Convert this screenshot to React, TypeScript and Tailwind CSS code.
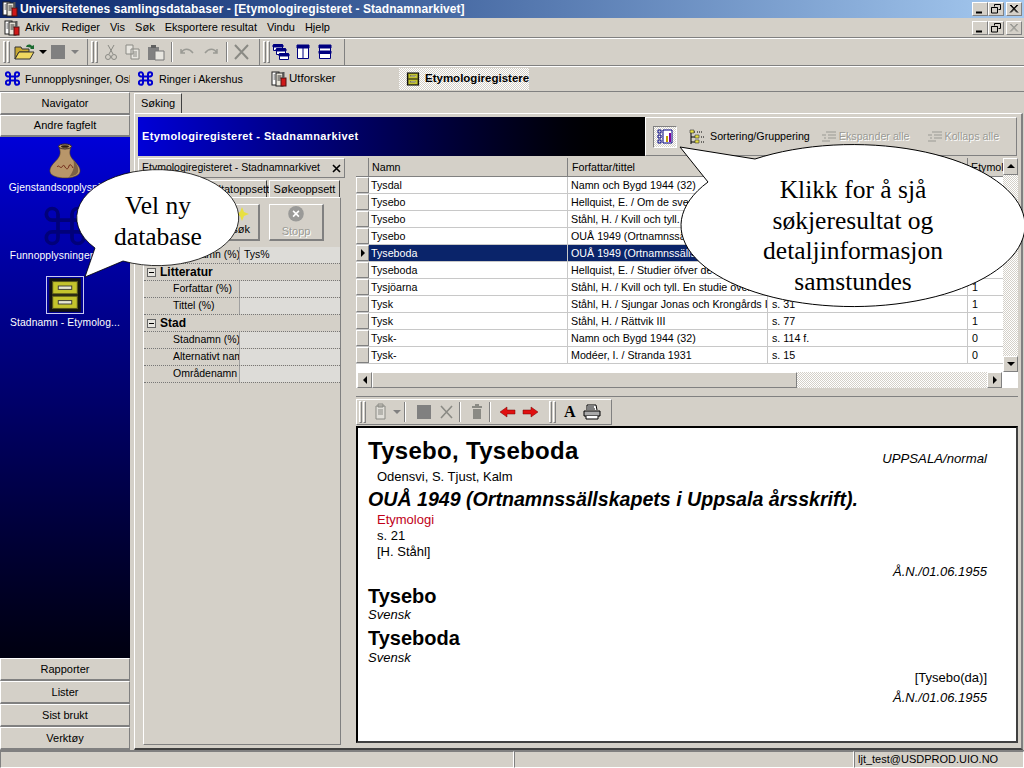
import React from 'react';

const raised = 'border border-t-white border-l-white border-r-[#808080] border-b-[#808080] bg-[#d4d0c8]';
const sunken = 'border border-t-[#808080] border-l-[#808080] border-r-white border-b-white';
const dither = 'bg-[repeating-conic-gradient(#d4d0c8_0_25%,#ffffff_0_50%)] bg-[length:2px_2px]';
const disabledText = 'text-[#9a9a94] [text-shadow:1px_1px_0_#ffffff]';

const AppIcon = ({ size = 16 }: { size?: number }) => (
  <svg width={size} height={size} viewBox="0 0 16 16" className="shrink-0">
    <rect x="1" y="1" width="7" height="13" fill="#fff" stroke="#222" />
    <rect x="5" y="2" width="7" height="13" fill="#e8e4d8" stroke="#222" />
    <path d="M6.5 5h4M6.5 7h4M6.5 9h3" stroke="#333" />
    <path d="M2.5 4h2M2.5 6h2M2.5 8h2" stroke="#555" />
    <rect x="10" y="7" width="5" height="8" fill="#d01818" stroke="#501010" />
    <rect x="11.5" y="1" width="2" height="6" fill="#555" />
  </svg>
);

const Knot = ({ size = 18, color = '#0000d0', width = 2.4 }: { size?: number; color?: string; width?: number }) => (
  <svg width={size} height={size} viewBox="0 0 18 18" fill="none" stroke={color} strokeWidth={width} className="shrink-0">
    <path d="M6 6V4a2.5 2.5 0 1 0-2.5 2.5H14.5A2.5 2.5 0 1 0 12 4v10a2.5 2.5 0 1 0 2.5-2.5H3.500A2.500 2.500 0 1 0 6 14Z" />
  </svg>
);

const Cabinet = ({ size = 16 }: { size?: number }) => (
  <svg width={size} height={size} viewBox="0 0 16 16" className="shrink-0">
    <rect x="1" y="0.500" width="14" height="15" fill="#111" />
    <rect x="2.500" y="2" width="11" height="5.500" fill="#c4c42c" stroke="#55551a" strokeWidth=".5" />
    <rect x="2.500" y="8.500" width="11" height="5.500" fill="#c4c42c" stroke="#55551a" strokeWidth=".5" />
    <rect x="5" y="4" width="6" height="1.500" fill="#e8e8d0" stroke="#333" strokeWidth=".4" />
    <rect x="5" y="10.500" width="6" height="1.500" fill="#e8e8d0" stroke="#333" strokeWidth=".4" />
  </svg>
);

const Vase = () => (
  <svg width="32" height="36" viewBox="0 0 32 36" className="shrink-0">
    <ellipse cx="16" cy="3.500" rx="6.500" ry="2.500" fill="#b89a72" stroke="#3a2a18" />
    <ellipse cx="16" cy="3.500" rx="4" ry="1.300" fill="#2a1c10" />
    <path d="M10.500 5c1 5 1 7-2 11C5 20 0 24 1 29c1 4 8 6 15 6s14-2 15-6c1-5-4-9-7.500-13-3-4-3-6-2-11-3 1.500-8 1.500-11 0Z" fill="#b8966a" stroke="#4a3520" strokeWidth=".6" />
    <path d="M8 24c2-3 3 2 5 0s1-3 3 0 3 2 4-1 3 0 4 2" fill="none" stroke="#702818" strokeWidth="1" />
    <path d="M24 16c3 4 6 8 5 13-1 3-5 4-9 5 5-6 6-12 4-18Z" fill="#7d6244" />
  </svg>
);

const Grip = () => (
  <div className="flex gap-px h-[22px] mx-[2px] shrink-0">
    <div className={`w-[3px] ${raised}`} />
    <div className={`w-[3px] ${raised}`} />
  </div>
);

const Sep = () => <div className="w-[2px] h-[20px] mx-[3px] border-l border-l-[#808080] border-r border-r-white shrink-0" />;

const WinBtn = ({ kind, disabled }: { kind: 'min' | 'max' | 'close'; disabled?: boolean }) => (
  <div className={`w-[16px] h-[14px] flex items-center justify-center ${raised}`}>
    <svg width="12" height="10" viewBox="0 0 12 10" fill="none" stroke={disabled ? '#9a9a94' : '#000'}>
      {kind === 'min' && <path d="M2 8.500h6" strokeWidth="2" />}
      {kind === 'max' && <path d="M4.500 2.500V.500h6v5H8.500M1.500 3.500h6v5.500h-6ZM1.500 3.500h6" />}
      {kind === 'close' && <path d="M2 1l7 7.500M3 1l7 7.500M9 1L2 8.500M10 1L3 8.500" />}
    </svg>
  </div>
);

const Arrow = ({ dir, color = '#000' }: { dir: 'up' | 'down' | 'left' | 'right'; color?: string }) => {
  const d = { up: 'M0 5L4 1L8 5Z', down: 'M0 2H8L4 6Z', left: 'M6 0V8L2 4Z', right: 'M2 0V8L6 4Z' }[dir];
  return (
    <svg width="8" height="8" viewBox="0 0 8 8">
      <path d={d} fill={color} />
    </svg>
  );
};

const SideButton = ({ label, h = 'h-[23px]' }: { label: string; h?: string }) => (
  <div className={`${h} shrink-0 flex items-center justify-center text-black ${raised} border-b-[#6f6f6f] border-b-2`}>{label}</div>
);

const SideItem = ({ icon, label, h }: { icon: React.ReactNode; label: string; h: string }) => (
  <div className={`flex flex-col items-center justify-end text-white text-[10.300px] tracking-[0.1px] whitespace-nowrap ${h}`}>
    {icon}
    <div className="h-[18px] leading-[18px]">{label}</div>
  </div>
);

const rows = [
  ['Tysdal', 'Namn och Bygd 1944 (32)', 's. 113', '1'],
  ['Tysebo', 'Hellquist, E. / Om de svenska ortnamnen', 's. 44', '1'],
  ['Tysebo', 'Ståhl, H. / Kvill och tyll. En studie över', 's. 97', '1'],
  ['Tysebo', 'OUÅ 1949 (Ortnamnssällskapets i Uppsala', 's. 21', '1'],
  ['Tyseboda', 'OUÅ 1949 (Ortnamnssällskapets i Uppsala', 's. 21', '1'],
  ['Tyseboda', 'Hellquist, E. / Studier öfver de svenska sjönamn', 's. 636', '1'],
  ['Tysjöarna', 'Ståhl, H. / Kvill och tyll. En studie över', 's. 97', '1'],
  ['Tysk', 'Ståhl, H. / Sjungar Jonas och Krongårds I', 's. 31', '1'],
  ['Tysk', 'Ståhl, H. / Rättvik III', 's. 77', '1'],
  ['Tysk-', 'Namn och Bygd 1944 (32)', 's. 114 f.', '0'],
  ['Tysk-', 'Modéer, I. / Stranda 1931', 's. 15', '0'],
];

const PropRow = ({ label, value }: { label: string; value?: string }) => (
  <div className="h-[17px] flex border-b border-dotted border-b-[#777] shrink-0">
    <div className="w-[96px] shrink-0 flex items-center overflow-hidden whitespace-nowrap pl-[29px] text-[10.500px] border-r border-r-[#a0a0a0]">{label}</div>
    <div className="flex-1 bg-[#dddcd8] flex items-center pl-[4px] text-[10.500px]">{value}</div>
  </div>
);

const PropHead = ({ label }: { label: string }) => (
  <div className="h-[17px] flex items-center gap-[4px] pl-[3px] font-bold text-[12px] border-b border-dotted border-b-[#777] shrink-0">
    <div className="w-[9px] h-[9px] border border-[#666] bg-[#e8e6e0] flex items-center justify-center">
      <div className="w-[5px] h-px bg-black" />
    </div>
    {label}
  </div>
);

const TinyIcon = ({ children }: { children: React.ReactNode }) => (
  <svg width="18" height="18" viewBox="0 0 18 18" fill="none" className="shrink-0">{children}</svg>
);

export default function App() {
  return (
    <div className="relative w-[1024px] h-[768px] overflow-hidden bg-[#d4d0c8] flex flex-col text-[11px] text-black font-['Liberation_Sans',Arial,sans-serif]">
      {/* title bar */}
      <div className="h-[18px] shrink-0 flex items-center pl-[2px] pr-[2px] bg-gradient-to-r from-[#0a246a] to-[#a6caf0] text-white font-bold text-[12px] tracking-[0.06px]">
        <AppIcon />
        <span className="ml-[2px] flex-1">Universitetenes samlingsdatabaser - [Etymologiregisteret - Stadnamnarkivet]</span>
        <WinBtn kind="min" />
        <WinBtn kind="max" />
        <div className="w-[2px]" />
        <WinBtn kind="close" />
      </div>

      {/* menu */}
      <div className="h-[20px] shrink-0 flex items-center pl-[4px] pr-[2px] border-b border-b-[#808080]">
        <AppIcon />
        <nav className="flex gap-[10px] ml-[5px] flex-1">
          <span>Arkiv</span>
          <span className="ml-[2px]">Rediger</span>
          <span>Vis</span>
          <span>Søk</span>
          <span>Eksportere resultat</span>
          <span>Vindu</span>
          <span>Hjelp</span>
        </nav>
        <WinBtn kind="min" />
        <WinBtn kind="max" />
        <div className="w-[2px]" />
        <WinBtn kind="close" disabled />
      </div>

      {/* toolbar */}
      <div className="h-[28px] shrink-0 flex items-center border-t border-t-white border-b border-b-[#808080]">
        <div className="flex items-center h-full pl-[1px] pr-[2px] w-[88px] border-r border-r-[#808080]">
          <Grip />
          <svg width="22" height="18" viewBox="0 0 22 18" className="ml-[2px] shrink-0">
            <path d="M1 4h6l1 2h7v3H5L1 16Z" fill="#c8a830" stroke="#333" />
            <path d="M1 16l4-7h15l-4 7Z" fill="#f0d860" stroke="#333" />
            <path d="M12 4c1-3 4-3 6-1l2-1v4h-4l1-1c-1-1-3-1-5-1Z" fill="#1a6a30" />
          </svg>
          <div className="ml-[3px]"><Arrow dir="down" /></div>
          <div className="w-[14px] h-[14px] bg-[#808080] ml-[4px] shrink-0" />
          <div className="ml-[6px]"><Arrow dir="down" color="#808080" /></div>
        </div>
        <div className="flex items-center h-full pl-[1px] w-[172px] border-r border-r-[#808080]">
          <Grip />
          <div className="w-[22px] flex justify-center">
            <TinyIcon>
              <path d="M6 2l5 9M12 2L7 11" stroke="#8a8a84" />
              <circle cx="6" cy="14" r="2.500" stroke="#8a8a84" />
              <circle cx="12" cy="14" r="2.500" stroke="#8a8a84" />
            </TinyIcon>
          </div>
          <div className="ml-[2px]">
            <TinyIcon>
              <path d="M2 2h7v9H2ZM7 6h8v10H7Z" fill="#e8e6e0" stroke="#8a8a84" />
              <path d="M9 9h4M9 11h4M9 13h4" stroke="#8a8a84" />
            </TinyIcon>
          </div>
          <div className="ml-[5px]">
            <TinyIcon>
              <path d="M1 4h11v13H1Z" fill="#808080" />
              <path d="M4 2h5v3H4Z" fill="#606060" />
              <path d="M8 8h9v9H8Z" fill="#e8e6e0" stroke="#777" />
            </TinyIcon>
          </div>
          <div className="ml-[3px]"><Sep /></div>
          <div className="flex gap-[6px] ml-[2px]">
            <TinyIcon><path d="M3 6v4h4M3 10c3-5 8-5 12 0" stroke="#9a9a94" strokeWidth="1.500" /></TinyIcon>
            <TinyIcon><path d="M15 6v4h-4M15 10c-3-5-8-5-12 0" stroke="#9a9a94" strokeWidth="1.500" /></TinyIcon>
          </div>
          <div className="ml-[3px]"><Sep /></div>
          <div className="ml-[2px]">
            <TinyIcon><path d="M2 2l13 14M15 2L2 16" stroke="#8a8a84" strokeWidth="2" /></TinyIcon>
          </div>
        </div>
        <div className="flex items-center h-full pl-[1px] w-[85px] border-r border-r-[#808080]">
          <Grip />
          <svg width="64" height="18" viewBox="0 0 64 18" className="ml-[-2px]" fill="none" stroke="#000080">
            <path d="M3.500 1.500h9v6h-9Z" fill="#fff" />
            <path d="M3 2h10v2H3Z" fill="#000080" />
            <path d="M6.500 5.500h9v6h-9Z" fill="#fff" />
            <path d="M6 6h10v2H6Z" fill="#000080" />
            <path d="M9.500 10.500h9v6h-9Z" fill="#fff" />
            <path d="M9 11h10v2H9Z" fill="#000080" />
            <path d="M27.500 2.500h11v13h-11Z" fill="#fff" />
            <path d="M27 2h12v3H27Z" fill="#000080" />
            <path d="M33 2v14" />
            <path d="M49.500 2.500h11v13h-11Z" fill="#fff" />
            <path d="M49 2h12v3H49ZM49 8h12v2.500H49Z" fill="#000080" />
          </svg>
        </div>
      </div>

      {/* document tabs */}
      <div className="h-[26px] shrink-0 flex items-center border-t border-t-white border-b border-b-[#808080]">
        <div className="w-[130px] flex items-center pl-[5px] gap-[5px] whitespace-nowrap overflow-hidden text-[10.700px]">
          <Knot size={15} />
          <span>Funnopplysninger, Oslo</span>
        </div>
        <div className="w-[131px] flex items-center pl-[8px] gap-[6px] whitespace-nowrap text-[10.700px]">
          <Knot size={15} />
          <span>Ringer i Akershus</span>
        </div>
        <div className="w-[125px] flex items-center pl-[10px] gap-[2px] text-[11.500px]">
          <AppIcon />
          <span>Utforsker</span>
        </div>
        <div className={`ml-[13px] w-[130px] h-[22px] flex items-center pl-[7px] gap-[5px] font-bold text-[11.500px] whitespace-nowrap overflow-hidden ${dither}`}>
          <Cabinet size={14} />
          <span>Etymologiregistere</span>
        </div>
      </div>

      {/* main */}
      <div className="flex-1 flex min-h-0">
        {/* navigator */}
        <div className="w-[130px] shrink-0 flex flex-col">
          <SideButton label="Navigator" />
          <SideButton label="Andre fagfelt" h="h-[22px]" />
          <div className="flex-1 bg-gradient-to-b from-[#0000d8] to-[#000010] flex flex-col">
            <SideItem h="h-[60px]" icon={<Vase />} label="Gjenstandsopplysninger" />
            <SideItem h="h-[68px]" icon={<Knot size={42} color="#00007a" width={1.600} />} label="Funnopplysninger, Oslo" />
            <SideItem h="h-[67px]" icon={<div className="border border-[#c8c8f0]"><Cabinet size={36} /></div>} label="Stadnamn - Etymolog..." />
          </div>
          <SideButton label="Rapporter" />
          <SideButton label="Lister" />
          <SideButton label="Sist brukt" />
          <SideButton label="Verktøy" />
        </div>

        {/* right side */}
        <div className="flex-1 ml-[4px] flex flex-col">
          <div className="h-[21px] pt-[1px] shrink-0 flex">
            <div className="w-[48px] flex items-center justify-center bg-[#d4d0c8] border-t border-t-white border-l border-l-white border-r border-r-[#404040]">Søking</div>
          </div>
          <div className="flex-1 min-h-0 border-t border-t-white border-l border-l-white border-r-2 border-r-[#808080] border-b-2 border-b-[#404040] pl-[3px] pr-[3px] pt-[3px] pb-[3px] flex flex-col mr-[2px]">
            {/* header band */}
            <div className="h-[39px] shrink-0 flex mr-[1px]">
              <div className="w-[507px] bg-gradient-to-r from-[#0000d8] to-[#000000] flex items-center pl-[4px] text-white font-bold tracking-[0.4px]">
                Etymologiregisteret - Stadnamnarkivet
              </div>
              <div className={`flex-1 flex items-center text-[10.700px] ${raised}`}>
                <div className={`ml-[7px] w-[24px] h-[22px] flex items-center justify-center ${sunken} ${dither}`}>
                  <svg width="16" height="16" viewBox="0 0 16 16" fill="none">
                    <path d="M1 1h3v3H1ZM1 6h3v3H1ZM1 11h3v3H1Z" stroke="#000080" />
                    <path d="M6 1h9v13H6Z" fill="#fff" stroke="#000080" />
                    <path d="M9 7h2v6H9Z" fill="#c0a000" />
                    <path d="M12 4h2v9h-2Z" fill="#8000a0" />
                  </svg>
                </div>
                <svg width="16" height="16" viewBox="0 0 16 16" fill="none" className="ml-[12px] shrink-0">
                  <path d="M2 1v14" stroke="#000" />
                  <path d="M2 3h4M2 8h4M2 13h4" stroke="#000" />
                  <path d="M1 1h4v3H1ZM6 6h4v3H6ZM6 11h4v3H6Z" fill="#e8e040" stroke="#333" strokeWidth=".6" />
                  <path d="M8 3h6M12 8h3M12 13h3" stroke="#000" strokeDasharray="1 1" />
                </svg>
                <span className="ml-[5px] whitespace-nowrap">Sortering/Gruppering</span>
                <svg width="16" height="14" viewBox="0 0 16 14" fill="none" stroke="#9a9a94" className="ml-[11px] shrink-0">
                  <path d="M5 2h10M7 5h8M7 8h8M1 11h8M3 8h2M1 5h4" />
                </svg>
                <span className={`ml-[2px] whitespace-nowrap ${disabledText}`}>Ekspander alle</span>
                <svg width="16" height="14" viewBox="0 0 16 14" fill="none" stroke="#9a9a94" className="ml-[17px] shrink-0">
                  <path d="M5 2h10M7 5h8M7 8h8M1 11h8M3 8h2M1 5h4" />
                </svg>
                <span className={`ml-[2px] whitespace-nowrap ${disabledText}`}>Kollaps alle</span>
              </div>
            </div>

            <div className="flex-1 min-h-0 flex mt-[2px]">
              {/* search panel */}
              <div className="w-[207px] shrink-0 flex flex-col">
                <div className={`h-[20px] shrink-0 flex items-center justify-between px-[3px] text-[10.500px] ${raised}`}>
                  <span>Etymologiregisteret - Stadnamnarkivet</span>
                  <svg width="9" height="9" viewBox="0 0 9 9" stroke="#000" strokeWidth="1.600"><path d="M1 1l7 7M8 1L1 8" /></svg>
                </div>
                <div className="h-[17px] mt-[2px] shrink-0 flex justify-end pr-[5px] items-end gap-[2px]">
                  <div className="w-[72px] h-[17px] flex items-center justify-center border-t border-t-white border-l border-l-white border-r border-r-[#404040]">Resultatoppsett</div>
                  <div className="w-[71px] h-[17px] flex items-center justify-center border-t border-t-white border-l border-l-white border-r border-r-[#404040]">Søkeoppsett</div>
                </div>
                <div className={`flex-1 min-h-0 ml-[5px] mr-[4px] flex flex-col ${raised} border-l-[#808080]`}>
                  <div className="h-[49px] shrink-0 flex items-center justify-end gap-[9px] pr-[16px]">
                    <div className={`w-[65px] h-[37px] flex flex-col items-center justify-center ${raised} border-r-2 border-b-2 border-r-[#606060] border-b-[#606060]`}>
                      <svg width="14" height="14" viewBox="0 0 14 14" className="ml-[30px]"><path d="M7 0l2 5 5 2-5 2-2 5-2-5-5-2 5-2Z" fill="#e8e040" /></svg>
                      <span>Rask søk</span>
                    </div>
                    <div className={`w-[55px] h-[37px] flex flex-col items-center justify-center ${raised} border-r-2 border-b-2 border-r-[#606060] border-b-[#606060]`}>
                      <svg width="18" height="18" viewBox="0 0 18 18">
                        <circle cx="9" cy="9" r="8" fill="#9a9a98" />
                        <path d="M6 6l6 6M12 6l-6 6" stroke="#fff" strokeWidth="1.600" />
                      </svg>
                      <span className={disabledText}>Stopp</span>
                    </div>
                  </div>
                  <div className="flex flex-col">
                    <PropRow label="Stadnamn (%)" value="Tys%" />
                    <PropHead label="Litteratur" />
                    <PropRow label="Forfattar (%)" />
                    <PropRow label="Tittel (%)" />
                    <PropHead label="Stad" />
                    <PropRow label="Stadnamn (%)" />
                    <PropRow label="Alternativt namn" />
                    <PropRow label="Områdenamn" />
                  </div>
                </div>
              </div>

              {/* results + details */}
              <div className="w-[662px] shrink-0 ml-[11px] flex flex-col pb-[2px]">
                <div className="h-[230px] shrink-0 flex flex-col bg-white text-[10.700px]">
                  <div className="flex flex-1 min-h-0">
                    <div className="flex-1 min-w-0 flex flex-col">
                      <div className="h-[19px] flex bg-[#d4d0c8] shrink-0 border-b border-b-[#808080]">
                        <div className="w-[13px] border-r border-r-[#808080] shrink-0" />
                        <div className="w-[199px] pl-[3px] flex items-center border-r border-r-[#808080] shrink-0">Namn</div>
                        <div className="w-[200px] pl-[4px] flex items-center border-r border-r-[#808080] shrink-0">Forfattar/tittel</div>
                        <div className="w-[200px] pl-[4px] flex items-center border-r border-r-[#808080] shrink-0">Side</div>
                        <div className="flex-1 pl-[3px] flex items-center overflow-hidden">Etymol</div>
                      </div>
                      {rows.map((r, i) => {
                        const sel = i === 4;
                        return (
                          <div key={i} className={`h-[17px] flex shrink-0 border-b border-b-[#c8c8c8] ${sel ? 'bg-[#0a246a] text-white' : ''}`}>
                            <div className={`w-[13px] bg-[#d4d0c8] shrink-0 flex items-center justify-center border-r border-r-[#808080] text-black ${raised}`}>
                              {sel && <Arrow dir="right" />}
                            </div>
                            <div className="w-[199px] pl-[2px] flex items-center whitespace-nowrap overflow-hidden border-r border-r-[#c8c8c8] shrink-0">{r[0]}</div>
                            <div className="w-[200px] pl-[3px] flex items-center whitespace-nowrap overflow-hidden border-r border-r-[#c8c8c8] shrink-0">{r[1]}</div>
                            <div className="w-[200px] pl-[4px] flex items-center whitespace-nowrap overflow-hidden border-r border-r-[#c8c8c8] shrink-0">{r[2]}</div>
                            <div className="flex-1 pl-[4px] flex items-center">{r[3]}</div>
                          </div>
                        );
                      })}
                    </div>
                    <div className={`w-[15px] shrink-0 flex flex-col ${dither}`}>
                      <div className={`h-[17px] flex items-center justify-center ${raised}`}><Arrow dir="up" /></div>
                      <div className="flex-1" />
                      <div className={`h-[16px] flex items-center justify-center ${raised}`}><Arrow dir="down" /></div>
                    </div>
                  </div>
                  <div className="h-[16px] shrink-0 flex mr-[16px] ml-px">
                    <div className={`w-[15px] flex items-center justify-center ${raised}`}><Arrow dir="left" /></div>
                    <div className={`w-[425px] ${raised}`} />
                    <div className={`flex-1 ${dither}`} />
                    <div className={`w-[15px] flex items-center justify-center ${raised}`}><Arrow dir="right" /></div>
                  </div>
                </div>

                {/* detail toolbar */}
                <div className="h-[30px] shrink-0 mt-[8px] border-t border-t-[#808080] flex items-center">
                  <div className={`h-[26px] w-[256px] flex items-center ${raised}`}>
                    <Grip />
                    <div className="ml-[4px] flex items-center">
                      <TinyIcon>
                        <path d="M4 3h9v13H4Z" fill="#e0ded8" stroke="#8a8a84" />
                        <path d="M6 1h5v3H6ZM6 7h5M6 9h5M6 11h5" stroke="#8a8a84" />
                      </TinyIcon>
                    </div>
                    <div className="ml-[3px]"><Arrow dir="down" color="#808080" /></div>
                    <Sep />
                    <div className="w-[14px] h-[14px] bg-[#808080] ml-[8px] shrink-0" />
                    <div className="ml-[7px]">
                      <TinyIcon><path d="M3 3l11 12M14 3L3 15" stroke="#8a8a84" strokeWidth="1.600" /></TinyIcon>
                    </div>
                    <Sep />
                    <div className="ml-[4px]">
                      <TinyIcon><path d="M5 6h8v10H5ZM4 3h10v2H4ZM7 1h4v2H7Z" fill="#8a8a84" /></TinyIcon>
                    </div>
                    <Sep />
                    <svg width="38" height="12" viewBox="0 0 38 12" className="ml-[6px] shrink-0">
                      <path d="M0 6l7-5v3h8v4H7v3Z" fill="#e01010" stroke="#700" strokeWidth=".5" />
                      <path d="M38 6l-7-5v3h-8v4h8v3Z" fill="#e01010" stroke="#700" strokeWidth=".5" />
                    </svg>
                    <div className="ml-[9px]"><Grip /></div>
                    <span className="ml-[6px] font-['Liberation_Serif',serif] font-bold text-[16px]">A</span>
                    <svg width="18" height="16" viewBox="0 0 18 16" className="ml-[7px] shrink-0" fill="none" stroke="#000">
                      <path d="M4 6V1h9l1 5" fill="#fff" />
                      <path d="M1 7h16v5H1Z" fill="#aaa" />
                      <path d="M3 12v3h12v-3" fill="#fff" />
                      <path d="M5 3h6M5 5h7" />
                    </svg>
                  </div>
                </div>

                {/* detail */}
                <div className="flex-1 min-h-0 bg-white border-2 border-t-black border-l-black border-r-[#404040] border-b-[#404040] pl-[10px] pr-[29px] pt-[10px] text-[13px] leading-none">
                  <div className="h-[26px] flex items-center justify-between">
                    <span className="font-bold text-[24px] tracking-[0.3px]">Tysebo, Tyseboda</span>
                    <span className="italic text-[13.200px] mt-[16px]">UPPSALA/normal</span>
                  </div>
                  <div className="h-[24px] pl-[9px] flex items-center">Odensvi, S. Tjust, Kalm</div>
                  <div className="h-[23px] flex items-center font-bold italic text-[19.600px] whitespace-nowrap">OUÅ 1949 (Ortnamnssällskapets i Uppsala årsskrift).</div>
                  <div className="h-[16px] pl-[9px] flex items-center text-[#c00018]">Etymologi</div>
                  <div className="h-[16px] pl-[9px] flex items-center">s. 21</div>
                  <div className="h-[16px] pl-[9px] flex items-center">[H. Ståhl]</div>
                  <div className="h-[16px] mt-[4px] flex items-center justify-end italic">Å.N./01.06.1955</div>
                  <div className="h-[24px] mt-[5px] flex items-center font-bold text-[20px]">Tysebo</div>
                  <div className="h-[12px] flex items-center italic">Svensk</div>
                  <div className="h-[24px] mt-[6px] flex items-center font-bold text-[20px]">Tyseboda</div>
                  <div className="h-[12px] mt-px flex items-center italic">Svensk</div>
                  <div className="h-[16px] mt-[6px] flex items-center justify-end">[Tysebo(da)]</div>
                  <div className="h-[16px] mt-[4px] flex items-center justify-end italic">Å.N./01.06.1955</div>
                </div>
              </div>
            </div>
          </div>
        </div>
      </div>

      {/* status bar */}
      <div className="h-[18px] shrink-0 flex border-t border-t-[#808080] text-[11px]">
        <div className={`w-[514px] ${sunken}`} />
        <div className={`w-[340px] ${sunken}`} />
        <div className={`flex-1 flex items-center pl-[3px] ${sunken} whitespace-nowrap`}>ljt_test@USDPROD.UIO.NO</div>
      </div>

      {/* callouts over the page */}
      <svg width="1024" height="768" viewBox="0 0 1024 768" className="absolute inset-0 pointer-events-none">
        <path d="M123 261L85 277L95 248A81 48 0 1 1 123 261Z" fill="#fff" stroke="#000" strokeWidth="0.800" />
        <path d="M755 159L680 147L708 182A172 81 0 1 0 755 159Z" fill="#fff" stroke="#000" strokeWidth="1" />
      </svg>
      <div className="absolute left-[77px] top-[190px] w-[162px] text-center font-['Liberation_Serif',serif] text-[25.500px] leading-[31px] text-black">
        Vel ny<br />database
      </div>
      <div className="absolute left-[703px] top-[175px] w-[300px] text-center font-['Liberation_Serif',serif] text-[25.500px] leading-[30.500px] text-black">
        Klikk for å sjå<br />søkjeresultat og<br />detaljinformasjon<br />samstundes
      </div>
    </div>
  );
}
